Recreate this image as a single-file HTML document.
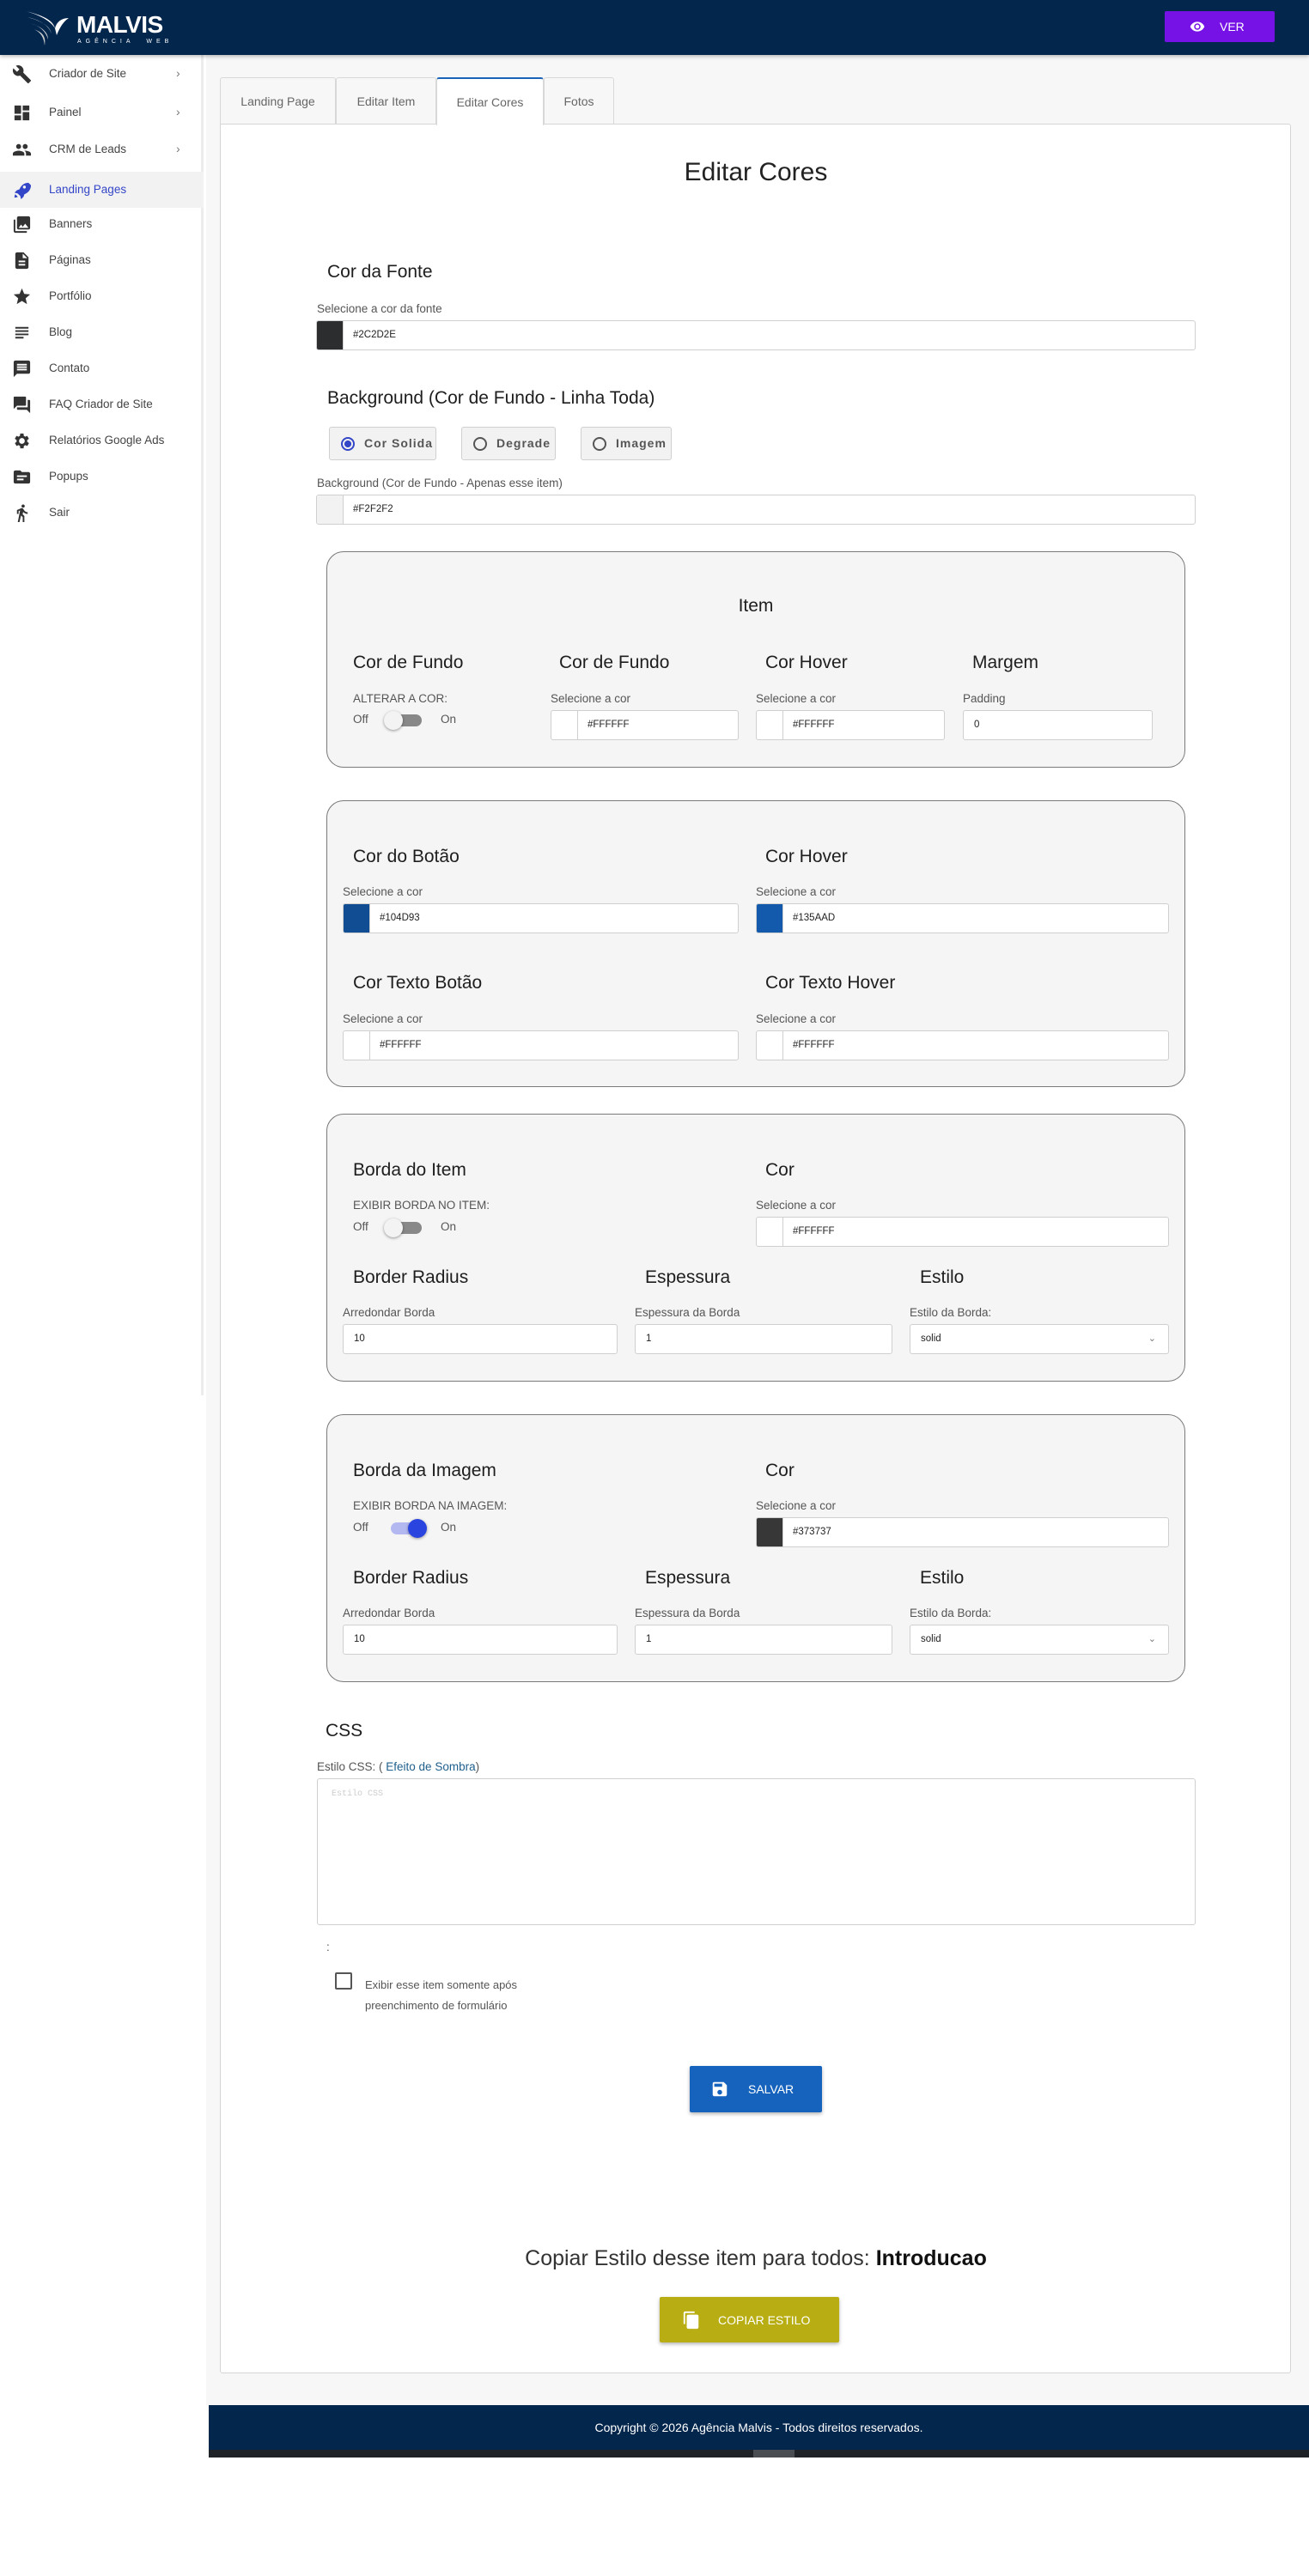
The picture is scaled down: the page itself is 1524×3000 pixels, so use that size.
<!DOCTYPE html>
<html><head><meta charset="utf-8">
<style>
*{box-sizing:border-box;margin:0;padding:0}
body{width:1524px;height:3000px;position:relative;background:#fff;font-family:"Liberation Sans",Arial,sans-serif;overflow:hidden}
.abs{position:absolute}
.hdr{left:0;top:0;width:1524px;height:64px;background:#03264d;box-shadow:0 2px 4px rgba(0,0,0,.25);z-index:3}
.side{left:0;top:64px;width:237px;height:1561px;background:#fff;border-right:3px solid #ececec}
.si{position:absolute;left:0;width:237px;height:42px;font-size:13.5px;color:#444}
.si svg{position:absolute;left:14px;top:10px;width:23px;height:23px;fill:#333}
.si span{position:absolute;left:57px;top:13px}
.si i{position:absolute;left:205px;top:12px;font-style:normal;color:#777;font-size:14px}
.main{left:240px;top:64px;width:1284px;height:2737px;background:#f7f7f7}
.tab{position:absolute;top:90px;height:55px;border:1px solid #d8d8d8;border-bottom:none;background:#f7f7f7;font-size:14px;color:#666;text-align:center;line-height:54px;border-radius:3px 3px 0 0}
.card{left:256px;top:144px;width:1247px;height:2620px;background:#fff;border:1px solid #d5d5d5;border-radius:0 3px 3px 3px}
.h{position:absolute;font-size:21px;color:#1e1e1e}
.lb{position:absolute;font-size:13.5px;color:#555}
.inp{position:absolute;height:35px;background:#fff;border:1px solid #cfcfcf;border-radius:3px;font-size:11.5px;color:#222;line-height:33px;padding-left:12px}
.cinp{position:absolute;height:35px;background:#fff;border:1px solid #cfcfcf;border-radius:3px;font-size:11.5px;color:#222;line-height:33px;padding-left:42px;overflow:hidden}
.cinp b{position:absolute;left:0;top:0;width:31px;height:100%;border-right:1px solid #cfcfcf}
.box{position:absolute;left:380px;width:1000px;background:#f5f5f5;border:1.5px solid #7a7a7a;border-radius:20px}
.tg{position:absolute;width:46px;height:14px}
.tg .tr{position:absolute;left:4px;top:0;width:40px;height:14px;border-radius:7px;background:#888}
.tg .kn{position:absolute;top:-4px;width:22px;height:22px;border-radius:50%;background:#f3f3f3;box-shadow:0 1px 3px rgba(0,0,0,.4)}
.rad{position:absolute;top:497px;height:39px;border:1px solid #d0d0d0;border-radius:3px;background:#f2f2f2;font-size:14px;letter-spacing:1px;color:#555;font-weight:bold;line-height:37px;padding-left:40px}
.rad s{position:absolute;left:13px;top:11px;width:16px;height:16px;border:2px solid #555;border-radius:50%}
.sel{position:absolute;height:35px;background:#fff;border:1px solid #cfcfcf;border-radius:3px;font-size:11.5px;color:#222;line-height:33px;padding-left:12px}
.sel i{position:absolute;right:14px;top:0;font-style:normal;color:#777;font-size:11px}
</style></head><body>

<div class="abs hdr">
  <svg class="abs" style="left:28px;top:11px" width="54" height="44" viewBox="0 0 54 44">
    <path d="M2 2 C16 6 30 12 36 22 C34 14 26 8 2 2Z" fill="#fff"/>
    <path d="M4 9 C18 12 28 18 32 28 C30 20 22 14 4 9Z" fill="#e8e8e8"/>
    <path d="M7 16 C18 19 25 25 28 35 C28 26 20 20 7 16Z" fill="#ddd"/>
    <path d="M11 23 C19 26 23 32 24 42 C26 30 20 26 11 23Z" fill="#ccc"/>
    <path d="M36 22 C38 14 44 10 52 10 C46 14 42 20 38 30Z" fill="#fff"/>
  </svg>
  <div class="abs" style="left:89px;top:13px;color:#fff;font-size:28px;font-weight:bold;letter-spacing:-0.5px">MALVIS</div>
  <div class="abs" style="left:90px;top:45px;color:#fff;font-size:7px;letter-spacing:5px">AGÊNCIA&nbsp;&nbsp;WEB</div>
  <div class="abs" style="left:1356px;top:13px;width:128px;height:36px;background:#7612e6;border-radius:2px;color:#fff;font-size:14px;line-height:36px">
    <svg class="abs" style="left:28px;top:9px" width="20" height="18" viewBox="0 0 24 24"><path fill="#fff" d="M12 4.5C7 4.5 2.7 7.6 1 12c1.7 4.4 6 7.5 11 7.5s9.3-3.1 11-7.5c-1.7-4.4-6-7.5-11-7.5zM12 17a5 5 0 110-10 5 5 0 010 10zm0-8a3 3 0 100 6 3 3 0 000-6z"/></svg>
    <span class="abs" style="left:64px;top:0">VER</span>
  </div>
</div>

<div class="abs side">
  <div class="si" style="top:1px"><svg viewBox="0 0 24 24"><path d="M22.7 19l-9.1-9.1c.9-2.3.4-5-1.5-6.9-2-2-5-2.4-7.4-1.3L9 6 6 9 1.6 4.7C.4 7.1.9 10.1 2.9 12.1c1.9 1.9 4.6 2.4 6.9 1.5l9.1 9.1c.4.4 1 .4 1.4 0l2.3-2.3c.5-.4.5-1.1.1-1.4z"/></svg><span>Criador de Site</span><i>›</i></div>
  <div class="si" style="top:46px"><svg viewBox="0 0 24 24"><path d="M3 13h8V3H3v10zm0 8h8v-6H3v6zm10 0h8V11h-8v10zm0-18v6h8V3h-8z"/></svg><span>Painel</span><i>›</i></div>
  <div class="si" style="top:89px"><svg viewBox="0 0 24 24"><path d="M16 11c1.66 0 3-1.34 3-3s-1.34-3-3-3-3 1.34-3 3 1.34 3 3 3zm-8 0c1.66 0 3-1.34 3-3S9.66 5 8 5 5 6.34 5 8s1.34 3 3 3zm0 2c-2.33 0-7 1.17-7 3.5V19h14v-2.5c0-2.33-4.67-3.5-7-3.5zm8 0c-.29 0-.62.02-.97.05 1.16.84 1.97 1.97 1.97 3.45V19h6v-2.5c0-2.33-4.67-3.5-7-3.5z"/></svg><span>CRM de Leads</span><i>›</i></div>
  <div class="si" style="top:136px;background:#f2f2f2;color:#3446c8"><svg viewBox="0 0 24 24" style="fill:#3446c8"><path d="M20 3c-5 0-9 3-11 8l-3 1-3 3 4 1 3 3 1 4 3-3 1-3c5-2 8-6 8-11zM15 10a1.8 1.8 0 110-3.6 1.8 1.8 0 010 3.6zM4 17c-1 1-1 4-1 4s3 0 4-1z"/></svg><span>Landing Pages</span></div>
  <div class="si" style="top:176px"><svg viewBox="0 0 24 24"><path d="M22 16V4c0-1.1-.9-2-2-2H8c-1.1 0-2 .9-2 2v12c0 1.1.9 2 2 2h12c1.1 0 2-.9 2-2zm-11-4l2 2.7L16 11l4 5H8l3-4zM2 6v14c0 1.1.9 2 2 2h14v-2H4V6H2z"/></svg><span>Banners</span></div>
  <div class="si" style="top:218px"><svg viewBox="0 0 24 24"><path d="M14 2H6c-1.1 0-2 .9-2 2v16c0 1.1.89 2 2 2h12c1.1 0 2-.9 2-2V8l-6-6zm2 16H8v-2h8v2zm0-4H8v-2h8v2zm-3-5V3.5L18.5 9H13z"/></svg><span>Páginas</span></div>
  <div class="si" style="top:260px"><svg viewBox="0 0 24 24"><path d="M12 17.27L18.18 21l-1.64-7.03L22 9.24l-7.19-.61L12 2 9.19 8.63 2 9.24l5.46 4.73L5.82 21z"/></svg><span>Portfólio</span></div>
  <div class="si" style="top:302px"><svg viewBox="0 0 24 24"><path d="M14 17H4v2h10v-2zm6-8H4v2h16V9zM4 15h16v-2H4v2zM4 5v2h16V5H4z"/></svg><span>Blog</span></div>
  <div class="si" style="top:344px"><svg viewBox="0 0 24 24"><path d="M20 2H4c-1.1 0-2 .9-2 2v18l4-4h14c1.1 0 2-.9 2-2V4c0-1.1-.9-2-2-2zm-2 12H6v-2h12v2zm0-3H6V9h12v2zm0-3H6V6h12v2z"/></svg><span>Contato</span></div>
  <div class="si" style="top:386px"><svg viewBox="0 0 24 24"><path d="M21 6h-2v9H6v2c0 .55.45 1 1 1h11l4 4V7c0-.55-.45-1-1-1zm-4 6V3c0-.55-.45-1-1-1H3c-.55 0-1 .45-1 1v14l4-4h10c.55 0 1-.45 1-1z"/></svg><span>FAQ Criador de Site</span></div>
  <div class="si" style="top:428px"><svg viewBox="0 0 24 24"><path d="M19.4 13a7.5 7.5 0 000-2l2.1-1.6-2-3.5-2.5 1a7.6 7.6 0 00-1.7-1L15 3h-4l-.4 2.9a7.6 7.6 0 00-1.7 1l-2.5-1-2 3.5L6.6 11a7.5 7.5 0 000 2l-2.1 1.6 2 3.5 2.5-1a7.6 7.6 0 001.7 1L11 21h4l.4-2.9a7.6 7.6 0 001.7-1l2.5 1 2-3.5zM13 15.5a3.5 3.5 0 110-7 3.5 3.5 0 010 7z" transform="translate(-1 0)"/></svg><span>Relatórios Google Ads</span></div>
  <div class="si" style="top:470px"><svg viewBox="0 0 24 24"><path d="M20 6h-8l-2-2H4c-1.1 0-2 .9-2 2v12c0 1.1.9 2 2 2h16c1.1 0 2-.9 2-2V8c0-1.1-.9-2-2-2zm-6 10H6v-2h8v2zm4-4H6v-2h12v2z"/></svg><span>Popups</span></div>
  <div class="si" style="top:512px"><svg viewBox="0 0 24 24"><path d="M13.5 5.5c1.1 0 2-.9 2-2s-.9-2-2-2-2 .9-2 2 .9 2 2 2zM9.8 8.9L7 23h2.1l1.8-8 2.1 2v6h2v-7.5l-2.1-2 .6-3C14.8 12 16.8 13 19 13v-2c-1.9 0-3.5-1-4.3-2.4l-1-1.6c-.4-.6-1-1-1.7-1-.3 0-.5.1-.8.1L6 8.3V13h2V9.6l1.8-.7"/></svg><span>Sair</span></div>
</div>

<div class="abs main"></div>
<div class="tab" style="left:256px;width:135px">Landing Page</div>
<div class="tab" style="left:391px;width:117px">Editar Item</div>
<div class="tab" style="left:508px;width:125px;background:#fff;border-top:2px solid #1a63b8;height:56px;z-index:2">Editar Cores</div>
<div class="tab" style="left:633px;width:82px">Fotos</div>

<div class="abs card"></div>
<div class="abs" style="left:600px;width:560px;top:184px;text-align:center;font-size:30px;color:#222">Editar Cores</div>

<div class="h" style="left:381px;top:305px">Cor da Fonte</div>
<div class="lb" style="left:369px;top:352px">Selecione a cor da fonte</div>
<div class="cinp" style="left:368px;top:373px;width:1024px"><b style="background:#2c2d2e"></b>#2C2D2E</div>

<div class="h" style="left:381px;top:452px">Background (Cor de Fundo - Linha Toda)</div>
<div class="rad" style="left:383px;width:125px"><s style="border-color:#3446c8;background:radial-gradient(#3446c8 45%,transparent 50%)"></s>Cor Solida</div>
<div class="rad" style="left:537px;width:110px"><s></s>Degrade</div>
<div class="rad" style="left:676px;width:106px"><s></s>Imagem</div>
<div class="lb" style="left:369px;top:555px">Background (Cor de Fundo - Apenas esse item)</div>
<div class="cinp" style="left:368px;top:576px;width:1024px"><b style="background:#f2f2f2"></b>#F2F2F2</div>

<!-- box 1 -->
<div class="box" style="top:642px;height:252px"></div>
<div class="h" style="left:380px;width:1000px;text-align:center;top:694px">Item</div>
<div class="h" style="left:411px;top:760px">Cor de Fundo</div>
<div class="h" style="left:651px;top:760px">Cor de Fundo</div>
<div class="h" style="left:891px;top:760px">Cor Hover</div>
<div class="h" style="left:1132px;top:760px">Margem</div>
<div class="lb" style="left:411px;top:806px">ALTERAR A COR:</div>
<div class="lb" style="left:411px;top:830px">Off</div>
<div class="tg" style="left:447px;top:832px"><div class="tr"></div><div class="kn" style="left:0"></div></div>
<div class="lb" style="left:513px;top:830px">On</div>
<div class="lb" style="left:641px;top:806px">Selecione a cor</div>
<div class="cinp" style="left:641px;top:827px;width:219px"><b></b>#FFFFFF</div>
<div class="lb" style="left:880px;top:806px">Selecione a cor</div>
<div class="cinp" style="left:880px;top:827px;width:220px"><b></b>#FFFFFF</div>
<div class="lb" style="left:1121px;top:806px">Padding</div>
<div class="inp" style="left:1121px;top:827px;width:221px">0</div>

<!-- box 2 -->
<div class="box" style="top:932px;height:334px"></div>
<div class="h" style="left:411px;top:986px">Cor do Botão</div>
<div class="h" style="left:891px;top:986px">Cor Hover</div>
<div class="lb" style="left:399px;top:1031px">Selecione a cor</div>
<div class="cinp" style="left:399px;top:1052px;width:461px"><b style="background:#104d93"></b>#104D93</div>
<div class="lb" style="left:880px;top:1031px">Selecione a cor</div>
<div class="cinp" style="left:880px;top:1052px;width:481px"><b style="background:#135aad"></b>#135AAD</div>
<div class="h" style="left:411px;top:1133px">Cor Texto Botão</div>
<div class="h" style="left:891px;top:1133px">Cor Texto Hover</div>
<div class="lb" style="left:399px;top:1179px">Selecione a cor</div>
<div class="cinp" style="left:399px;top:1200px;width:461px"><b></b>#FFFFFF</div>
<div class="lb" style="left:880px;top:1179px">Selecione a cor</div>
<div class="cinp" style="left:880px;top:1200px;width:481px"><b></b>#FFFFFF</div>

<!-- box 3 -->
<div class="box" style="top:1297px;height:312px"></div>
<div class="h" style="left:411px;top:1351px">Borda do Item</div>
<div class="h" style="left:891px;top:1351px">Cor</div>
<div class="lb" style="left:411px;top:1396px">EXIBIR BORDA NO ITEM:</div>
<div class="lb" style="left:411px;top:1421px">Off</div>
<div class="tg" style="left:447px;top:1423px"><div class="tr"></div><div class="kn" style="left:0"></div></div>
<div class="lb" style="left:513px;top:1421px">On</div>
<div class="lb" style="left:880px;top:1396px">Selecione a cor</div>
<div class="cinp" style="left:880px;top:1417px;width:481px"><b></b>#FFFFFF</div>
<div class="h" style="left:411px;top:1476px">Border Radius</div>
<div class="h" style="left:751px;top:1476px">Espessura</div>
<div class="h" style="left:1071px;top:1476px">Estilo</div>
<div class="lb" style="left:399px;top:1521px">Arredondar Borda</div>
<div class="inp" style="left:399px;top:1542px;width:320px">10</div>
<div class="lb" style="left:739px;top:1521px">Espessura da Borda</div>
<div class="inp" style="left:739px;top:1542px;width:300px">1</div>
<div class="lb" style="left:1059px;top:1521px">Estilo da Borda:</div>
<div class="sel" style="left:1059px;top:1542px;width:302px">solid<i>&#8964;</i></div>

<!-- box 4 -->
<div class="box" style="top:1647px;height:312px"></div>
<div class="h" style="left:411px;top:1701px">Borda da Imagem</div>
<div class="h" style="left:891px;top:1701px">Cor</div>
<div class="lb" style="left:411px;top:1746px">EXIBIR BORDA NA IMAGEM:</div>
<div class="lb" style="left:411px;top:1771px">Off</div>
<div class="tg" style="left:451px;top:1773px"><div class="tr" style="background:#b3b8f0"></div><div class="kn" style="left:24px;background:#2a44e0"></div></div>
<div class="lb" style="left:513px;top:1771px">On</div>
<div class="lb" style="left:880px;top:1746px">Selecione a cor</div>
<div class="cinp" style="left:880px;top:1767px;width:481px"><b style="background:#373737"></b>#373737</div>
<div class="h" style="left:411px;top:1826px">Border Radius</div>
<div class="h" style="left:751px;top:1826px">Espessura</div>
<div class="h" style="left:1071px;top:1826px">Estilo</div>
<div class="lb" style="left:399px;top:1871px">Arredondar Borda</div>
<div class="inp" style="left:399px;top:1892px;width:320px">10</div>
<div class="lb" style="left:739px;top:1871px">Espessura da Borda</div>
<div class="inp" style="left:739px;top:1892px;width:300px">1</div>
<div class="lb" style="left:1059px;top:1871px">Estilo da Borda:</div>
<div class="sel" style="left:1059px;top:1892px;width:302px">solid<i>&#8964;</i></div>

<!-- CSS -->
<div class="h" style="left:379px;top:2004px">CSS</div>
<div class="lb" style="left:369px;top:2050px">Estilo CSS: ( <span style="color:#1f5f8c">Efeito de Sombra</span>)</div>
<div class="abs" style="left:369px;top:2071px;width:1023px;height:171px;border:1px solid #cfcfcf;border-radius:3px;background:#fff;font-family:'Liberation Mono',monospace;font-size:10px;color:#ccc;padding:12px 16px">Estilo CSS</div>
<div class="lb" style="left:380px;top:2260px">:</div>
<div class="abs" style="left:390px;top:2297px;width:20px;height:20px;border:2px solid #555;border-radius:2px"></div>
<div class="lb" style="left:425px;top:2300px;font-size:13px;line-height:24px">Exibir esse item somente após<br>preenchimento de formulário</div>

<div class="abs" style="left:803px;top:2406px;width:154px;height:54px;background:#1563bd;border-radius:2px;box-shadow:0 2px 4px rgba(0,0,0,.3);color:#fff;font-size:14px">
  <svg class="abs" style="left:24px;top:16px" width="22" height="22" viewBox="0 0 24 24"><path fill="#fff" d="M17 3H5c-1.1 0-2 .9-2 2v14c0 1.1.9 2 2 2h14c1.1 0 2-.9 2-2V7l-4-4zm-5 16c-1.66 0-3-1.34-3-3s1.34-3 3-3 3 1.34 3 3-1.34 3-3 3zm3-10H5V5h10v4z"/></svg>
  <span class="abs" style="left:68px;top:19px">SALVAR</span>
</div>

<div class="abs" style="left:380px;width:1000px;top:2616px;text-align:center;font-size:25px;color:#333">Copiar Estilo desse item para todos: <b style="color:#111">Introducao</b></div>
<div class="abs" style="left:768px;top:2675px;width:209px;height:53px;background:#b8ad12;border-radius:2px;box-shadow:0 2px 4px rgba(0,0,0,.3);color:#fff;font-size:14px">
  <svg class="abs" style="left:26px;top:15px" width="22" height="24" viewBox="0 0 24 24"><path fill="#fff" d="M16 1H4c-1.1 0-2 .9-2 2v14h2V3h12V1zm3 4H8c-1.1 0-2 .9-2 2v14c0 1.1.9 2 2 2h11c1.1 0 2-.9 2-2V7c0-1.1-.9-2-2-2z"/></svg>
  <span class="abs" style="left:68px;top:19px">COPIAR ESTILO</span>
</div>

<div class="abs" style="left:243px;top:2801px;width:1281px;height:52px;background:#03264d;color:#fff;font-size:14px;text-align:center;line-height:52px">Copyright © 2026 Agência Malvis - Todos direitos reservados.</div>
<div class="abs" style="left:243px;top:2853px;width:1281px;height:9px;background:#1f2226"></div>
<div class="abs" style="left:877px;top:2853px;width:48px;height:9px;background:#4a4d52"></div>
</body></html>
